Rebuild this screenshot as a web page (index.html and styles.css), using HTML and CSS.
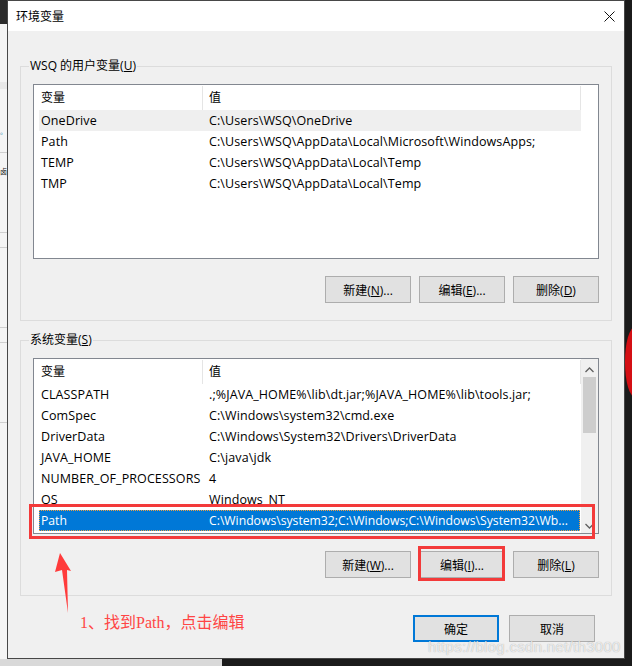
FILE: index.html
```html
<!DOCTYPE html>
<html lang="zh-CN">
<head>
<meta charset="utf-8">
<title>环境变量</title>
<link rel="stylesheet" href="styles.css">
</head>
<body>
<div class="desktop">
  <div class="bgwin">
    <div class="bgwin-top"></div>
    <div class="bgwin-band b1"></div>
    <div class="bgwin-frag f1">。</div>
    <div class="bgwin-frag f2">卤</div>
    <div class="bgwin-line l1"></div>
    <div class="bgwin-line l2"></div>
    <div class="bgwin-line l3"></div>
    <div class="bgwin-line l4"></div>
    <div class="bgwin-line l5"></div>
    <div class="bgwin-line l6"></div>
  </div>
  <div class="bottom-strip"></div>
  <div class="red-blob"></div>

  <div class="dialog">
    <div class="titlebar">
      <span class="title">环境变量</span>
      <svg class="close" width="11" height="11" viewBox="0 0 11 11"><path d="M0.5 0.5L10.5 10.5M10.5 0.5L0.5 10.5" stroke="#111" stroke-width="1"/></svg>
    </div>
    <div class="body">
      <fieldset class="group">
        <legend>WSQ 的用户变量(<u>U</u>)</legend>
        <div class="list">
          <div class="list-main">
            <div class="row head"><span class="c1">变量</span><span class="c2">值</span></div>
            <div class="row hover"><span class="c1">OneDrive</span><span class="c2">C:\Users\WSQ\OneDrive</span></div>
            <div class="row"><span class="c1">Path</span><span class="c2">C:\Users\WSQ\AppData\Local\Microsoft\WindowsApps;</span></div>
            <div class="row"><span class="c1">TEMP</span><span class="c2">C:\Users\WSQ\AppData\Local\Temp</span></div>
            <div class="row"><span class="c1">TMP</span><span class="c2">C:\Users\WSQ\AppData\Local\Temp</span></div>
          </div>
        </div>
        <div class="btns">
          <button class="btn">新建(<u>N</u>)...</button>
          <button class="btn">编辑(<u>E</u>)...</button>
          <button class="btn">删除(<u>D</u>)</button>
        </div>
      </fieldset>

      <fieldset class="group group2">
        <legend>系统变量(<u>S</u>)</legend>
        <div class="list">
          <div class="list-main">
            <div class="row head"><span class="c1">变量</span><span class="c2">值</span></div>
            <div class="row"><span class="c1">CLASSPATH</span><span class="c2">.;%JAVA_HOME%\lib\dt.jar;%JAVA_HOME%\lib\tools.jar;</span></div>
            <div class="row"><span class="c1">ComSpec</span><span class="c2">C:\Windows\system32\cmd.exe</span></div>
            <div class="row"><span class="c1">DriverData</span><span class="c2">C:\Windows\System32\Drivers\DriverData</span></div>
            <div class="row"><span class="c1">JAVA_HOME</span><span class="c2">C:\java\jdk</span></div>
            <div class="row"><span class="c1">NUMBER_OF_PROCESSORS</span><span class="c2">4</span></div>
            <div class="row"><span class="c1">OS</span><span class="c2">Windows_NT</span></div>
            <div class="row selected"><span class="c1">Path</span><span class="c2">C:\Windows\system32;C:\Windows;C:\Windows\System32\Wb...</span></div>
          </div>
          <div class="scrollbar">
            <svg class="arrow-up" width="9" height="6" viewBox="0 0 9 6"><path d="M0.5 5L4.5 1L8.5 5" fill="none" stroke="#606060" stroke-width="1.3"/></svg>
            <div class="thumb"></div>
            <div class="track"></div>
            <svg class="arrow-down" width="9" height="6" viewBox="0 0 9 6"><path d="M0.5 1L4.5 5L8.5 1" fill="none" stroke="#606060" stroke-width="1.3"/></svg>
          </div>
        </div>
        <div class="btns">
          <button class="btn">新建(<u>W</u>)...</button>
          <button class="btn">编辑(<u>I</u>)...</button>
          <button class="btn">删除(<u>L</u>)</button>
        </div>
      </fieldset>

      <div class="footer">
        <button class="btn primary">确定</button>
        <button class="btn">取消</button>
      </div>
    </div>
  </div>

  <div class="mark mark-row"></div>
  <div class="mark mark-btn"></div>
  <svg class="anno-arrow" width="24" height="64" viewBox="0 0 24 64"><polygon points="10,0 21,18 17,17 18,60 12,17 5,19" fill="#ff3b3b"/></svg>
  <div class="anno-text">1、找到Path，点击编辑</div>
  <div class="watermark">https://blog.csdn.net/th3000</div>
</div>
</body>
</html>
```

FILE: styles.css
```css
* { box-sizing: border-box; }
html, body { margin: 0; padding: 0; }
body {
  width: 632px;
  height: 666px;
  overflow: hidden;
  background: #1b1b1b;
  font-family: "Open Sans", "Noto Sans CJK SC", sans-serif;
  font-size: 12px;
  color: #000;
}
.desktop { position: relative; width: 632px; height: 666px; }

/* background window on the left */
.bgwin { position: absolute; left: 0; top: 0; width: 8px; height: 666px; background: #f4f4f4; overflow: hidden; }
.bgwin-top { height: 24px; background: #2b2b2b; }
.bgwin-band { position: absolute; left: 0; width: 8px; background: #e8e8e8; }
.b1 { top: 82px; height: 7px; }
.bgwin-frag { position: absolute; left: 0; font-size: 7px; line-height: 8px; color: #222; }
.f1 { top: 128px; color: #2a8ab0; }
.f2 { top: 168px; }
.bgwin-line { position: absolute; left: 0; width: 8px; height: 1px; background: #cfcfcf; }
.l1 { top: 152px; }
.l2 { top: 232px; }
.l3 { top: 247px; }
.l4 { top: 327px; }
.l5 { top: 342px; }
.l6 { top: 422px; }
.bottom-strip { position: absolute; left: 0; top: 659px; width: 222px; height: 7px; background: #d9d9d9; }
.red-blob { position: absolute; left: 625px; top: 327px; width: 20px; height: 70px; background: #d40f14; border-radius: 50% 0 0 50%; }

/* dialog window */
.dialog {
  position: absolute;
  left: 7px;
  top: 0;
  width: 618px;
  height: 659px;
  border: 1px solid #474747;
  background: #f0f0f0;
}
.titlebar {
  height: 30px;
  background: #fff;
  display: flex;
  align-items: center;
  justify-content: space-between;
  padding: 0 9px 0 8px;
}
.title { font-size: 12px; }
.close { display: block; }

.body { padding: 0 12px; }

.group {
  margin: 27px 0 0;
  padding: 10px 12px 17px;
  border: 1px solid #dcdcdc;
  min-width: 0;
}
.group legend {
  padding: 0 1px;
  margin-left: -4px;
  line-height: 16px;
  height: 16px;
  color: #000;
}
.group2 { margin-top: 11px; }

.list {
  display: flex;
  height: 175px;
  background: #fff;
  border: 1px solid #828790;
  overflow: hidden;
}
.group2 .list { height: 176px; }
.list-main { flex: 1; padding-left: 5px; }
.row {
  display: flex;
  width: 542px;
  height: 21px;
  line-height: 21px;
  white-space: nowrap;
  font-size: 12.5px;
  letter-spacing: 0.1px;
}
.row.head { height: 25px; line-height: 25px; font-size: 12px; letter-spacing: 0; }
.c1 { width: 164px; padding-left: 2px; overflow: hidden; }
.c2 { flex: 1; padding-left: 6px; overflow: hidden; }
.head .c1 { border-right: 1px solid #e5e5e5; height: 24px; margin-top: 1px; line-height: 23px; }
.head .c2 { border-right: 1px solid #e5e5e5; height: 24px; margin-top: 1px; line-height: 23px; }
.row.hover { background: #efefef; }
.row.selected {
  width: 541px;
  background: #0078d7;
  color: #fff;
  outline: 1px dotted #f0a040;
  outline-offset: -1px;
  font-size: 12.2px;
  letter-spacing: 0;
}

.scrollbar {
  width: 17px;
  background: #f0f0f0;
  display: flex;
  flex-direction: column;
  align-items: center;
  padding: 8px 0 4px;
}
.arrow-up, .arrow-down { display: block; flex: none; }
.thumb { width: 13px; height: 56px; margin-top: 4px; background: #cdcdcd; flex: none; }
.track { flex: 1; }

.btns {
  display: flex;
  justify-content: flex-end;
  gap: 8px;
  margin-top: 17px;
}
.btn {
  width: 86px;
  height: 27px;
  border: 1px solid #adadad;
  background: #e1e1e1;
  font-family: "Open Sans", "Noto Sans CJK SC", sans-serif;
  font-size: 12px;
  color: #000;
  padding: 0;
}
.footer {
  display: flex;
  justify-content: flex-end;
  gap: 10px;
  margin-top: 19px;
  padding-right: 17px;
}
.btn.primary { border: 2px solid #0078d7; }

/* annotations laid over the screenshot */
.mark { position: absolute; border: 3px solid #f33a3a; }
.mark-row { left: 29px; top: 504px; width: 566px; height: 35px; }
.mark-btn { left: 418px; top: 546px; width: 87px; height: 35px; }
.anno-arrow { position: absolute; left: 50px; top: 553px; }
.anno-text {
  position: absolute;
  left: 80px;
  top: 613px;
  font-family: "Liberation Serif", "Noto Sans CJK SC", serif;
  font-size: 16px;
  line-height: 20px;
  color: #ff4545;
}
.watermark {
  position: absolute;
  left: 428px;
  top: 638px;
  font-family: "Liberation Sans", sans-serif;
  font-size: 15px;
  line-height: 18px;
  color: rgba(255,255,255,0.75);
  text-shadow: 0 0 1px rgba(0,0,0,0.35);
  letter-spacing: 0.3px;
}
```
